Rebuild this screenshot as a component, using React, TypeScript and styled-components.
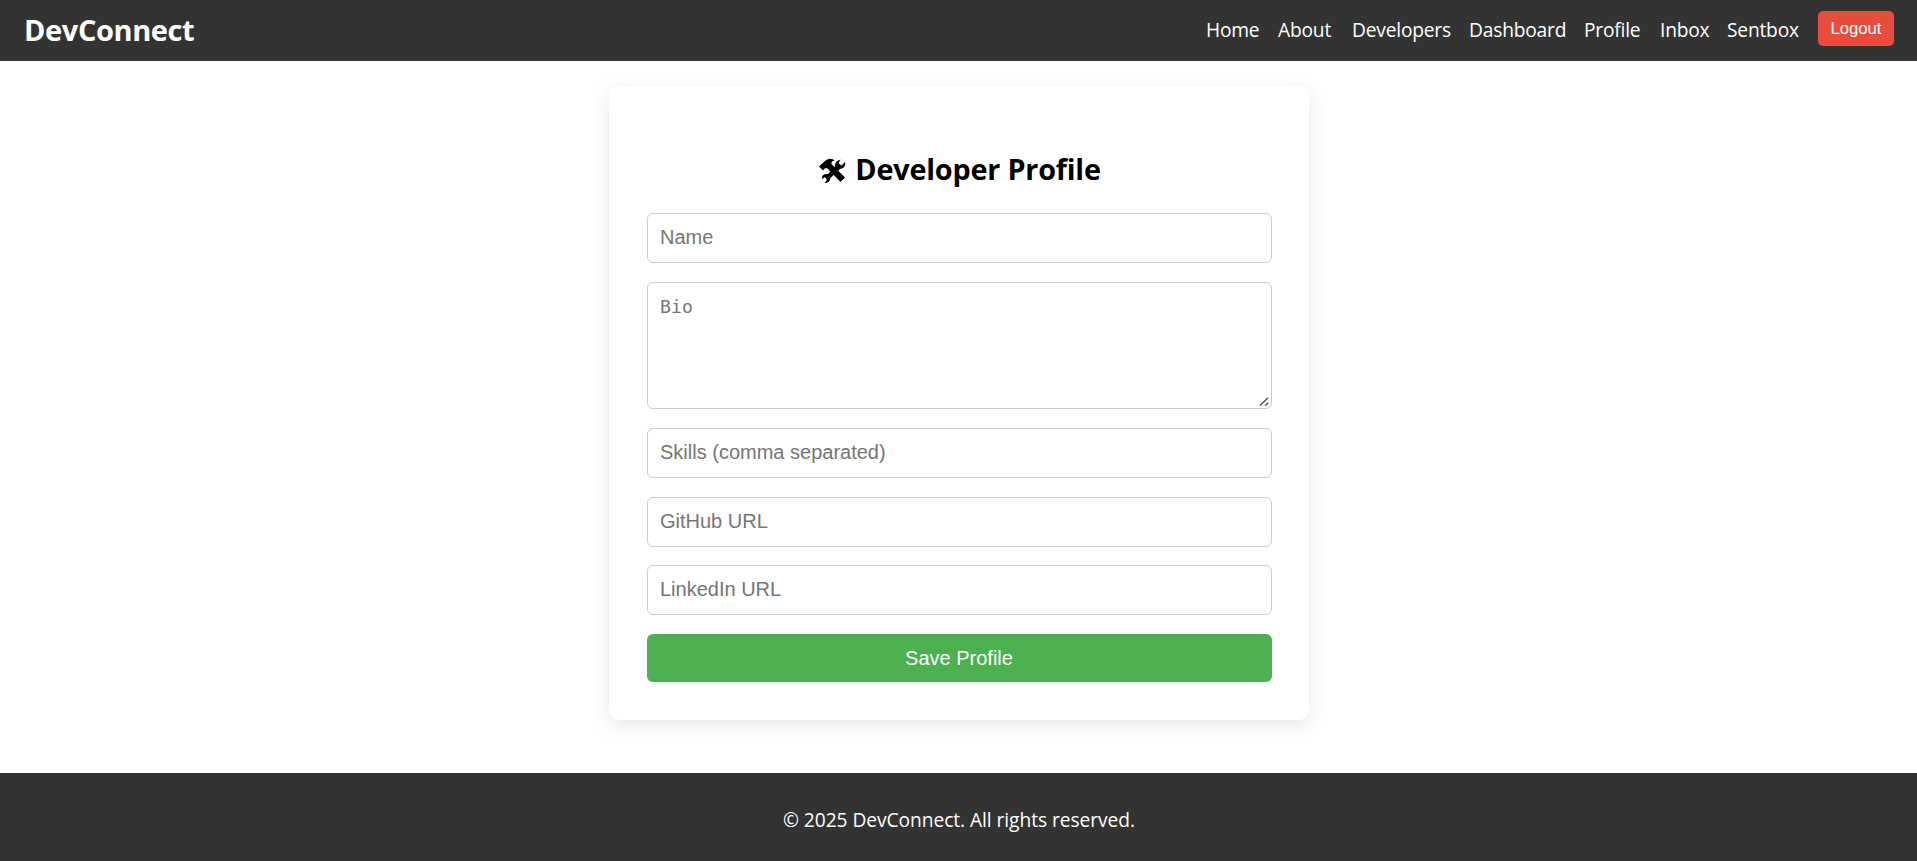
import React from 'react';
import styled, { createGlobalStyle } from 'styled-components';

const GlobalStyle = createGlobalStyle`
  *, *::before, *::after { box-sizing: border-box; }
  body {
    margin: 0;
    background: #fff;
    font-family: 'Open Sans', 'Noto Sans', sans-serif;
    font-size: 19.2px;
  }
`;

const Page = styled.div`
  height: 861px;
  display: flex;
  flex-direction: column;
`;

const Header = styled.header`
  height: 61px;
  padding: 0 23px 0 24px;
  background: #333;
  color: #fff;
  display: flex;
  align-items: center;
  justify-content: space-between;
`;

const Logo = styled.div`
  padding-bottom: 2px;
  font-size: 29px;
  font-weight: 700;
  line-height: 38px;
  letter-spacing: -0.4px;
`;

const Nav = styled.nav`
  display: flex;
  align-items: center;
  gap: 19px;
`;

const NavLink = styled.a<{ $width: number }>`
  width: ${(p) => p.$width}px;
  padding-bottom: 2px;
  color: #fff;
  text-decoration: none;
  line-height: 26px;
  letter-spacing: -0.2px;
  white-space: nowrap;
`;

const LogoutButton = styled.button`
  width: 76px;
  height: 35px;
  margin-bottom: 4px;
  padding: 0;
  border: 0;
  border-radius: 5px;
  background: #e74c3c;
  color: #fff;
  font: 16.67px 'Liberation Sans', Arial, sans-serif;
`;

const Main = styled.main`
  flex: 1;
  padding-top: 25px;
`;

const Card = styled.section`
  width: 700px;
  height: 634px;
  margin: 0 auto;
  padding: 61px 37px 0 38px;
  border-radius: 10px;
  background: #fff;
  box-shadow: 0 5px 19px rgba(0, 0, 0, 0.1);
`;

const Title = styled.h2`
  height: 42px;
  margin: 0 0 24.25px;
  padding-left: 2px;
  display: flex;
  align-items: center;
  justify-content: center;
  gap: 9px;
  color: #000;
  font-size: 28.8px;
  font-weight: 700;
  letter-spacing: -0.2px;
  white-space: nowrap;

  svg { margin-top: 4px; }
`;

const Form = styled.form`
  display: flex;
  flex-direction: column;
  gap: 18.75px;
`;

const Input = styled.input`
  height: 50px;
  padding: 0 12px 1px 12.5px;
  border: 1px solid #ccc;
  border-radius: 6px;
  font: 20px 'Liberation Sans', Arial, sans-serif;
  &::placeholder { color: #757575; }
`;

const TextAreaWrap = styled.div`
  position: relative;
  display: flex;
`;

const TextArea = styled.textarea`
  flex: 1;
  height: 127px;
  padding: 12px 12px 12px 12.5px;
  border: 1px solid #ccc;
  border-radius: 6px;
  resize: none;
  font: 18px/24px 'DejaVu Sans Mono', monospace;
  letter-spacing: 0.15px;
  &::placeholder { color: #757575; }
`;

const ResizeGrip = styled.svg`
  position: absolute;
  right: 2px;
  bottom: 2px;
  cursor: ns-resize;
`;

const SaveButton = styled.button`
  height: 48px;
  padding: 0;
  border: 0;
  border-radius: 6px;
  background: #4caf50;
  color: #fff;
  font: 20px 'Liberation Sans', Arial, sans-serif;
`;

const Footer = styled.footer`
  height: 88px;
  padding: 5px 0 0 1px;
  display: flex;
  align-items: center;
  justify-content: center;
  background: #333;
  color: #fff;
  letter-spacing: -0.06px;
`;

const links = [
  { label: 'Home', width: 53 },
  { label: 'About', width: 55 },
  { label: 'Developers', width: 98 },
  { label: 'Dashboard', width: 96 },
  { label: 'Profile', width: 57 },
  { label: 'Inbox', width: 48 },
  { label: 'Sentbox', width: 72 },
];

const ToolsIcon = () => (
  <svg width="27" height="25" viewBox="0 0 27 25" fill="#000" aria-hidden="true">
    <path d="M0 8.5 6 3Q11-1 16 2.5Q12 2.5 12.5 6L26 19.5 21.500 24 8.500 10.500Q6.500 9 4 12.500Z" />
    <path d="M16 8.500Q15.500 3 21.500 1.500L19.500 5 22.500 7.500 26 4Q27.500 10 21 11L11.500 20Q11 25 5.500 25L8 22 6 19 3 21Q2.500 15.500 9 16Z" />
  </svg>
);

export default function App() {
  return (
    <Page>
      <GlobalStyle />
      <Header>
        <Logo>DevConnect</Logo>
        <Nav>
          {links.map((l) => (
            <NavLink key={l.label} $width={l.width}>{l.label}</NavLink>
          ))}
          <LogoutButton type="button">Logout</LogoutButton>
        </Nav>
      </Header>
      <Main>
        <Card>
          <Title><ToolsIcon />Developer Profile</Title>
          <Form>
            <Input placeholder="Name" />
            <TextAreaWrap>
              <TextArea placeholder="Bio" />
              <ResizeGrip width="11" height="10" viewBox="0 0 11 10" stroke="#555" strokeWidth="1.5" aria-hidden="true">
                <path d="M1 8.500 9 .8M6 8.800 9.300 5.800" />
              </ResizeGrip>
            </TextAreaWrap>
            <Input placeholder="Skills (comma separated)" />
            <Input placeholder="GitHub URL" />
            <Input placeholder="LinkedIn URL" />
            <SaveButton type="button">Save Profile</SaveButton>
          </Form>
        </Card>
      </Main>
      <Footer>© 2025 DevConnect. All rights reserved.</Footer>
    </Page>
  );
}
